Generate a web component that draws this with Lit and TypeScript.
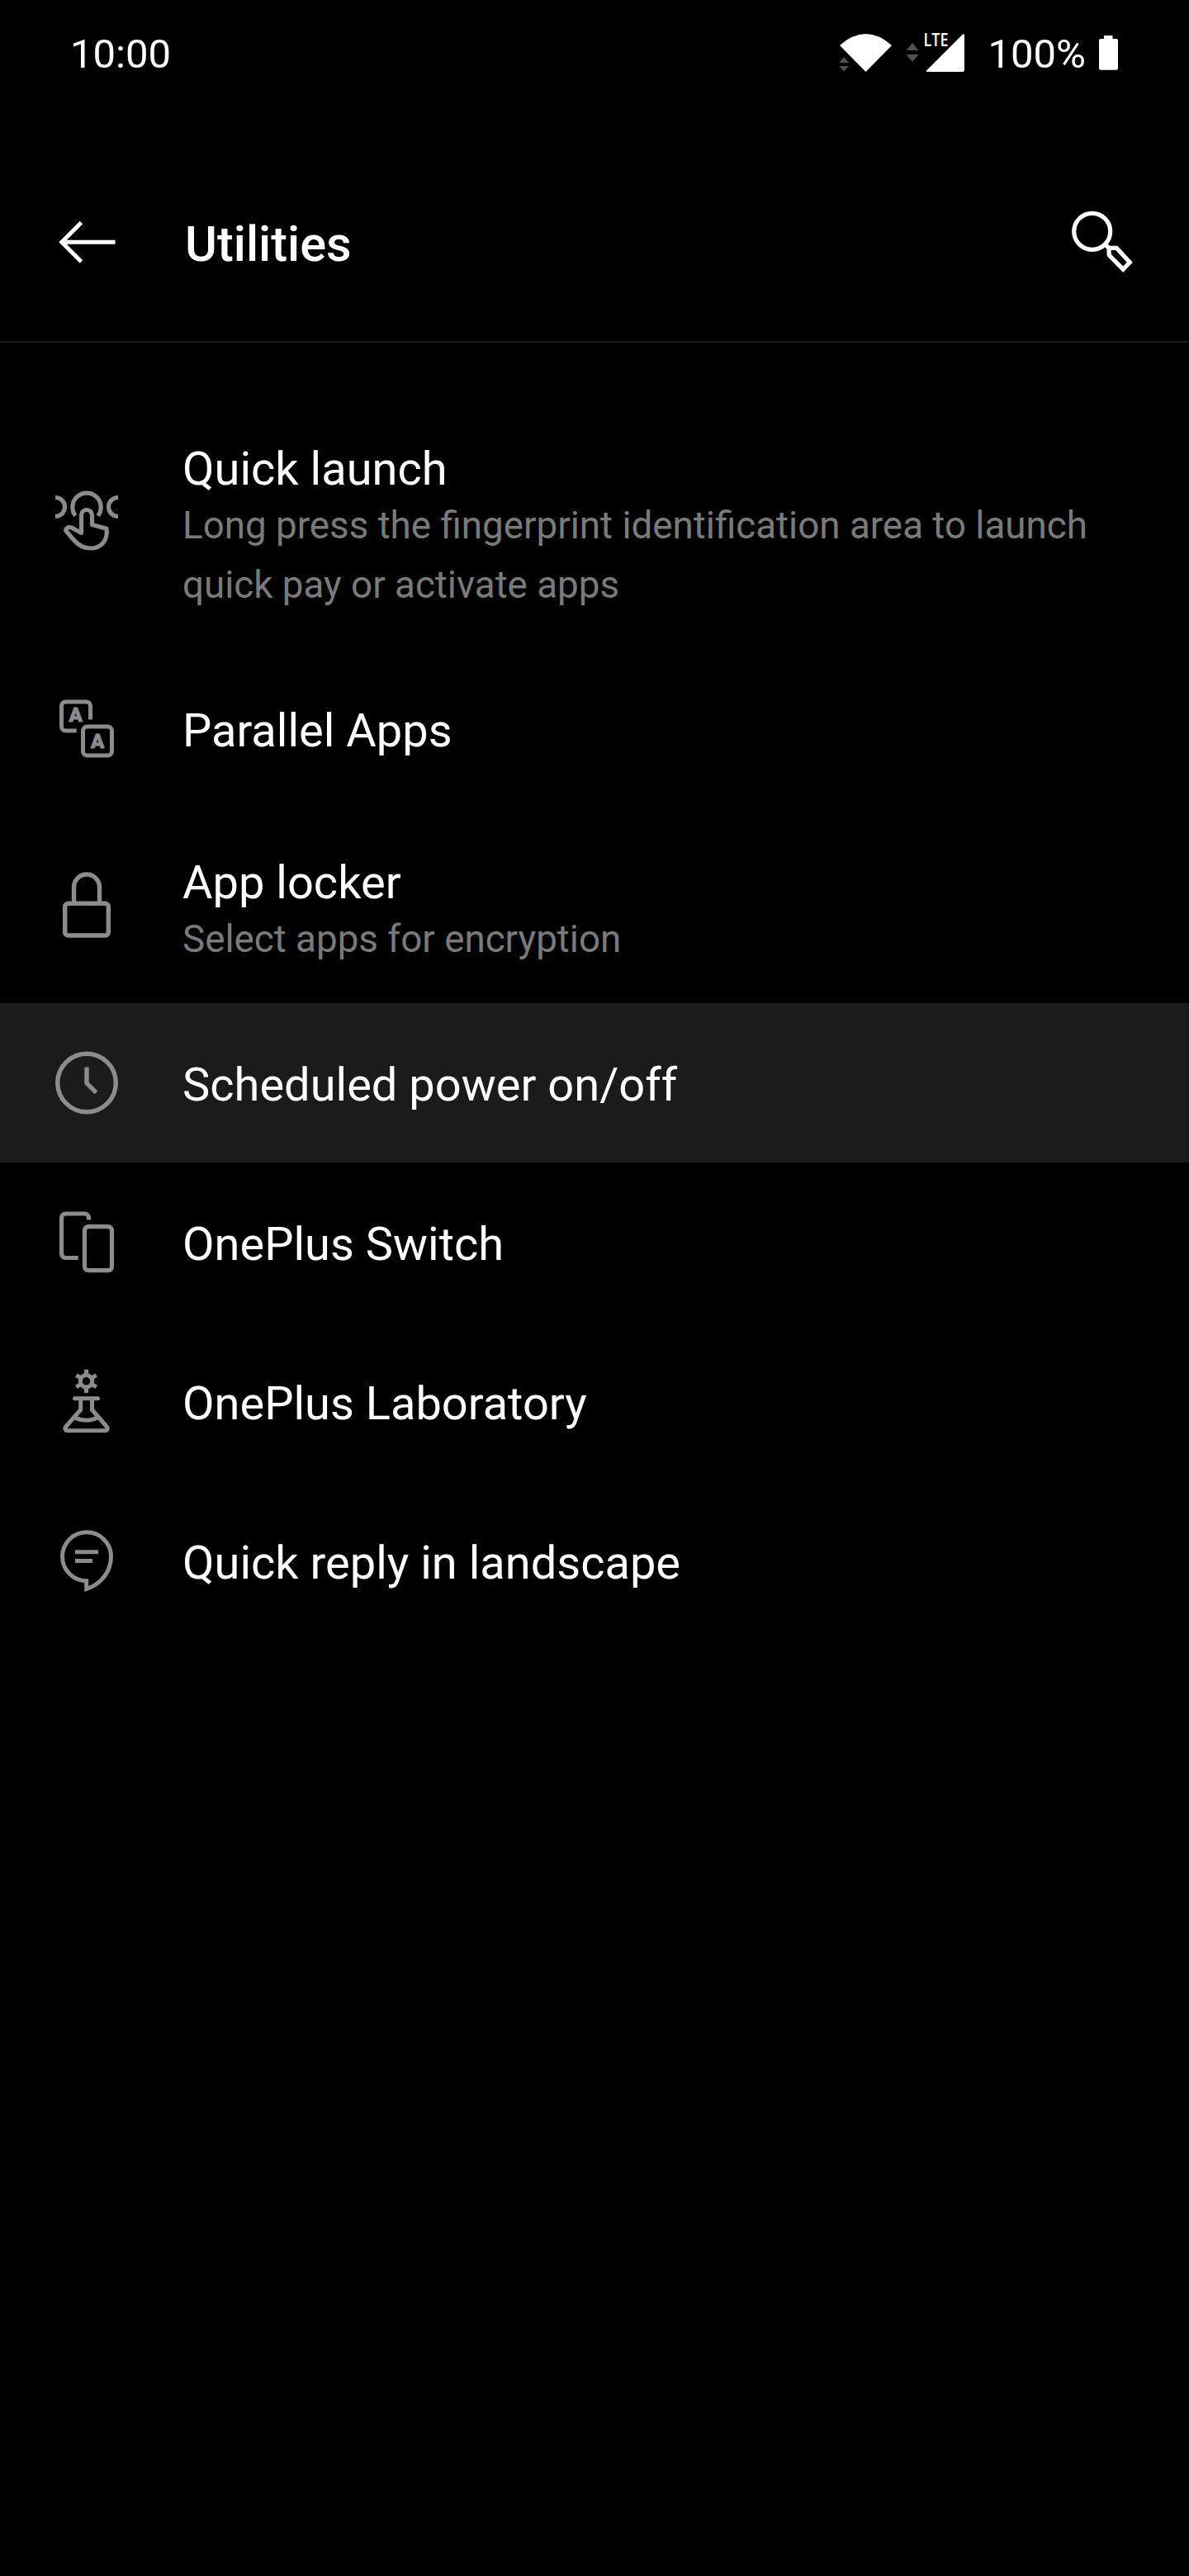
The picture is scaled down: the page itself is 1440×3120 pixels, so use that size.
import { LitElement, html, svg, css } from "lit";
import { customElement } from "lit/decorators.js";

const icons = {
  touch: svg`<g transform="translate(0 -7)" fill="none" stroke="currentColor" stroke-width="5.2">
    <path d="M41.300 54.800A17.200 17.200 0 1 1 68.700 54.800"/>
    <path d="M17 32.500A11.500 11.500 0 0 1 17 55.500M93 32.500A11.500 11.500 0 0 0 93 55.500"/>
    <path stroke-linejoin="round" d="M48.500 75.500V54a6.500 6.500 0 0 1 13 0V65.500L79 70.200C81 84 73 94 59.500 94C49 94 43 88.500 38.500 83L29.500 72.500C31 68 35 67.500 39 70.200L48.500 75.500Z"/></g>`,
  parallel: svg`<g transform="translate(0 2.5)"><g fill="none" stroke="currentColor" stroke-width="5">
    <path d="M42.700 54.500H29.500a5 5 0 0 1-5-5V24.500a5 5 0 0 1 5-5H54.500a5 5 0 0 1 5 5V41"/>
    <rect x="50.500" y="49.500" width="35" height="35" rx="5"/></g>
    <text class="glyph" x="41.800" y="43.700">A</text><text class="glyph" x="68.300" y="75.300">A</text></g>`,
  lock: svg`<g transform="translate(0 -2)" fill="none" stroke="currentColor" stroke-width="5.400">
    <rect x="28.700" y="54.200" width="52.600" height="38.800" rx="4"/>
    <path d="M39.500 54V34.500a15.500 15.500 0 0 1 31 0V54"/></g>`,
  clock: svg`<g fill="none" stroke="currentColor" stroke-width="5.400">
    <circle cx="55" cy="54.500" r="35.300"/><path d="M55 35.500V54.800L66.500 66.300"/></g>`,
  phones: svg`<g transform="translate(0 0.5)" fill="none" stroke="currentColor" stroke-width="5.200">
    <path d="M44.700 73H29.500a5 5 0 0 1-5-5V24.500a5 5 0 0 1 5-5H52.500a5 5 0 0 1 5 5V27"/>
    <rect x="52.500" y="35.200" width="33" height="53" rx="4.500"/></g>`,
  lab: svg`<g transform="translate(0 -2.5)" fill="none" stroke="currentColor" stroke-width="5">
    <circle cx="54.500" cy="32.300" r="7.300"/>
    <path d="M54.500 25V18.300M54.500 40V46.500M47.500 28.200L42.300 25.200M61.500 36.400L66.700 39.400M47.500 36.400L42.300 39.400M61.500 28.200L66.700 25.200"/>
    <path stroke-linecap="round" d="M40.500 53.300H68.500"/>
    <path d="M47.700 54V67L30.500 86.500C27.500 90 29 92.300 32.500 92.300H76.500C80 92.300 81.500 90 78.500 86.500L61.500 67V54"/>
    <path d="M39.500 76Q54.500 83.300 69.500 76"/></g>`,
  reply: svg`<g transform="translate(0 4.3)" fill="none" stroke="currentColor" stroke-width="5">
    <path d="M54.700 84.300V74.500A29.500 29.500 0 1 1 84.500 44.500C84.500 64 72 78.500 54.700 84.300Z"/>
    <path d="M41 39.500H69M41 50.300H62"/></g>`,
};

const items = [
  { icon: icons.touch, kind: "tall", title: "Quick launch", note: "Long press the fingerprint identification area to launch quick pay or activate apps" },
  { icon: icons.parallel, kind: "", title: "Parallel Apps" },
  { icon: icons.lock, kind: "double", title: "App locker", note: "Select apps for encryption" },
  { icon: icons.clock, kind: "active", title: "Scheduled power on/off" },
  { icon: icons.phones, kind: "", title: "OnePlus Switch" },
  { icon: icons.lab, kind: "", title: "OnePlus Laboratory" },
  { icon: icons.reply, kind: "", title: "Quick reply in landscape" },
];

@customElement("app-root")
export class AppRoot extends LitElement {
  static styles = css`
    :host { display: block; min-height: 3120px; background: #000; color: #fff; font-family: Roboto, sans-serif; }
    svg { display: block; flex: none; }
    .status { display: flex; justify-content: space-between; height: 132px; padding-left: 85px; font-size: 49px; line-height: 132px; }
    .signals { display: flex; }
    .lte { font: 600 21px "Open Sans", sans-serif; fill: #fff; }
    .bar { display: flex; align-items: center; height: 283px; padding: 40px 54px 0 50px; border-bottom: 2px solid #1c1c1c; box-sizing: border-box; }
    .heading { flex: 1; margin: 6px 0 0; padding-left: 74px; font-size: 59.500px; line-height: 72px; font-weight: 500; }
    .list { margin: 0; padding: 63px 0 0; list-style: none; }
    .row { display: flex; align-items: center; height: 193px; padding-left: 50px; box-sizing: border-box; }
    .tall { height: 308px; }
    .double { height: 236px; }
    .active { background: #1b1b1b; }
    .icon { color: #8c8c8c; }
    .glyph { font: 900 24px Roboto, sans-serif; text-anchor: middle; fill: currentColor; stroke: currentColor; stroke-width: 0.8px; }
    .copy { padding: 5px 90px 0 61px; }
    .tall .copy, .double .copy { padding-top: 16px; }
    .title { font-size: 56px; line-height: 66px; }
    .note { font-size: 45.750px; line-height: 72px; color: #7a7a7a; }
  `;

  render() {
    return html`
      <header class="status">
        <span>10:00</span>
        <div class="signals">
          <svg width="200" height="132" viewBox="996 0 200 132">
            <path fill="#fff" d="M1017 55Q1048.500 27 1080 55L1048.500 87Z"/>
            <path fill="#505050" d="M1022 69L1028 76H1016ZM1016 80H1028L1022 86.500ZM1105 52L1112.500 61H1097.500ZM1097.500 66H1112.500L1105 75Z"/>
            <path fill="#fff" d="M1122.500 85L1165.500 42Q1168 40 1168 43V84.500Q1168 87 1165.500 87H1123.500Q1121 87 1122.500 85Z"/>
            <text class="lte" x="1118.500" y="56" textLength="30" lengthAdjust="spacingAndGlyphs">LTE</text>
          </svg>
          <span>100%</span>
          <svg width="125" height="132" viewBox="1315 0 125 132">
            <path fill="#fff" d="M1337 43H1347.500V47H1352Q1354 47 1354 49V82.500Q1354 84.700 1352 84.700H1333Q1331 84.700 1331 82.500V49Q1331 47 1333 47H1337Z"/>
          </svg>
        </div>
      </header>
      <nav class="bar">
        <svg width="100" height="100" viewBox="50 242 100 100">
          <path fill="none" stroke="#fff" stroke-width="5" d="M98.500 268.500L74.800 292.300L98.500 316M75 292.300H139.500"/>
        </svg>
        <h1 class="heading">Utilities</h1>
        <svg width="100" height="100" viewBox="1286 242 100 100">
          <g fill="none" stroke="#fff" stroke-width="5.200">
            <circle cx="1322.700" cy="279.300" r="22"/>
            <path d="M1337.500 294.500L1343 299.300"/>
            <path d="M1343 299.300H1352.200L1368.300 316.700L1360.200 325.200L1343.200 308Z"/>
          </g>
        </svg>
      </nav>
      <ul class="list">
        ${items.map((item) => html`
          <li class="row ${item.kind}">
            <svg class="icon" width="110" height="110" viewBox="0 0 110 110">${item.icon}</svg>
            <div class="copy">
              <div class="title">${item.title}</div>
              ${item.note ? html`<div class="note">${item.note}</div>` : null}
            </div>
          </li>`)}
      </ul>`;
  }
}
